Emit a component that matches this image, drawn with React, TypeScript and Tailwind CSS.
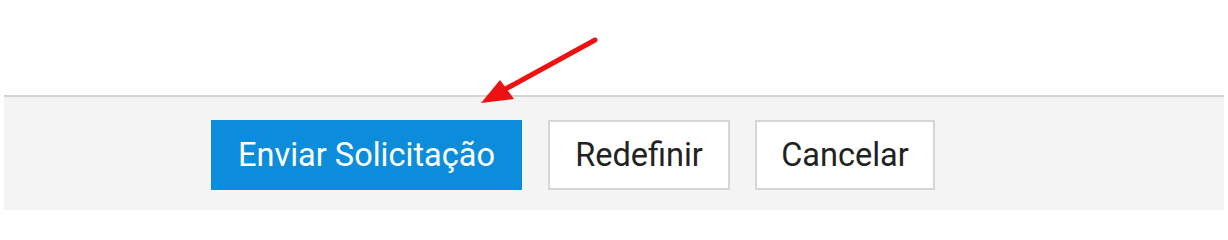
export default function App() {
  return (
    <div className="relative h-[229px] w-[1228px] overflow-hidden bg-white pt-[95px]" style={{ fontFamily: 'Roboto, "Liberation Sans", sans-serif' }}>
      <div className="mx-1 flex h-[115px] gap-[26px] border-t-2 border-[#d4d4d4] bg-[#f4f4f4] pl-[207px] pt-[23px]">
        <button className="h-[70px] w-[311px] bg-[#0b8ddc] text-[32.5px] text-white">Enviar Solicitação</button>
        <button className="h-[70px] w-[182px] border-2 border-[#d6d6d6] bg-white text-[32.5px] text-[#222]">Redefinir</button>
        <button className="-ml-px h-[70px] w-[180px] border-2 border-[#d6d6d6] bg-white text-[32.5px] text-[#222]">Cancelar</button>
      </div>
      <svg className="absolute left-0 top-0" width="1228" height="229" viewBox="0 0 1228 229">
        <line x1="595" y1="40" x2="500" y2="92" stroke="#ee1111" strokeWidth="5" strokeLinecap="round" />
        <polygon points="481,103 500,80 514,99" fill="#ee1111" />
      </svg>
    </div>
  );
}
